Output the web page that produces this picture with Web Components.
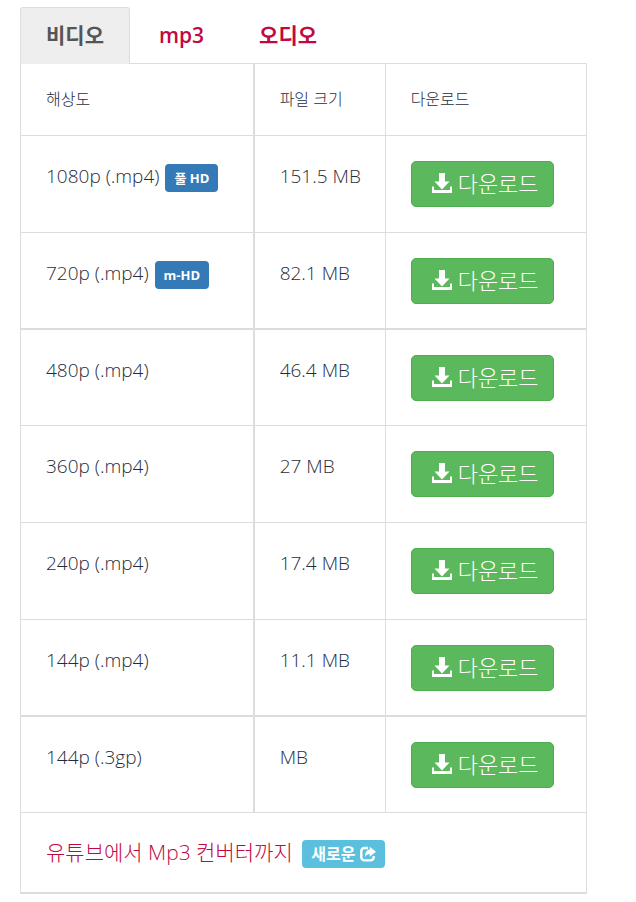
<!DOCTYPE html>
<html lang="ko">
<head>
<meta charset="utf-8">
<meta name="viewport" content="width=device-width, initial-scale=1">
<title>다운로드</title>
<style>
  body {
    margin: 0;
    background: #fff;
    color: #1f2d3d;
    font-family: "Open Sans", "Noto Sans CJK KR", sans-serif;
    font-size: 19px;
    font-weight: 300;
    line-height: 30px;
  }
</style>
</head>
<body>

<download-panel>
  <tab-bar slot="tabs">
    <tab-link active>비디오</tab-link>
    <tab-link>mp3</tab-link>
    <tab-link>오디오</tab-link>
  </tab-bar>
  <format-table></format-table>
</download-panel>

<script>
/* Outer box: tabs on top, the current tab's content below */
class DownloadPanel extends HTMLElement {
  constructor() {
    super();
    this.attachShadow({mode: 'open'});
    this.shadowRoot.innerHTML = `
      <style>
        :host {
          display: block;
          padding: 7px 49px 8px 20px;
        }
      </style>
      <slot name="tabs"></slot>
      <slot></slot>
    `;
  }
}
customElements.define('download-panel', DownloadPanel);


class TabBar extends HTMLElement {
  constructor() {
    super();
    this.attachShadow({mode: 'open'});
    this.shadowRoot.innerHTML = `
      <style>
        :host {
          display: block;
        }
        nav {
          display: flex;
          gap: 3px;
          margin-bottom: -1px; /* the active tab covers the table's top line */
        }
      </style>
      <nav><slot></slot></nav>
    `;
  }
}
customElements.define('tab-bar', TabBar);


class TabLink extends HTMLElement {
  constructor() {
    super();
    this.attachShadow({mode: 'open'});
    this.shadowRoot.innerHTML = `
      <style>
        :host {
          display: block;
        }
        a {
          display: block;
          padding: 12px 25px 14px;
          border: 1px solid transparent;
          border-bottom: 0;
          border-radius: 3px 3px 0 0;
          color: #c10841;
          font-size: 21px;
          font-weight: 600;
          text-decoration: none;
        }
        :host([active]) {
          position: relative;
          z-index: 1;
        }
        :host([active]) a {
          background: #eee;
          border-color: #ddd;
          color: #555;
        }
      </style>
      <a href="#"><slot></slot></a>
    `;
  }
}
customElements.define('tab-link', TabLink);


/* Small rounded badge, kind="info" is the light blue one */
class TextBadge extends HTMLElement {
  constructor() {
    super();
    this.attachShadow({mode: 'open'});
    this.shadowRoot.innerHTML = `
      <style>
        :host {
          display: inline-flex;
          align-items: center;
          gap: 5px;
          padding: 0 9px;
          border-radius: 4px;
          background: #337ab7;
          color: #fff;
          font-size: 13px;
          font-weight: 700;
          line-height: 28px;
          vertical-align: middle;
        }
        :host([kind="info"]) {
          background: #5bc0de;
          font-size: 16px;
        }
      </style>
      <slot></slot>
    `;
  }
}
customElements.define('text-badge', TextBadge);


class ShareIcon extends HTMLElement {
  constructor() {
    super();
    this.attachShadow({mode: 'open'});
    this.shadowRoot.innerHTML = `
      <style>
        :host { display: inline-flex; }
      </style>
      <svg width="16" height="16" viewBox="0 0 16 16" aria-hidden="true">
        <path d="M8 2H4.500A3.200 3.200 0 0 0 1.300 5.200v6A3.200 3.200 0 0 0 4.500 14.400h6a3.200 3.200 0 0 0 3.200-3.200V10" fill="none" stroke="#fff" stroke-width="2.400"/>
        <path d="M9.700.8L16 5.800l-6.300 5V8C7.800 8 6.300 8.700 5 11 5 6.500 6.800 3.700 9.700 3.400z" fill="#fff"/>
      </svg>
    `;
  }
}
customElements.define('share-icon', ShareIcon);


class DownloadButton extends HTMLElement {
  constructor() {
    super();
    this.attachShadow({mode: 'open'});
    this.shadowRoot.innerHTML = `
      <style>
        :host {
          display: block;
        }
        button {
          display: flex;
          align-items: center;
          gap: 6px;
          height: 46px;
          padding: 0 14px 2px 20px;
          border: 1px solid #4cae4c;
          border-radius: 5px;
          background: #5cb85c;
          color: #fff;
          font: inherit;
          font-size: 22px;
          white-space: nowrap;
          cursor: pointer;
        }
        button:hover {
          background: #449d44;
        }
      </style>
      <button type="button">
        <svg width="20" height="20" viewBox="0 0 20 20" aria-hidden="true">
          <path d="M7 0h6v8.500h4.500L10 16.500 2.500 8.500H7z" fill="#fff"/>
          <path d="M0 13.500h2V17h16v-3.500h2V20H0z" fill="#fff"/>
        </svg>
        <slot></slot>
      </button>
    `;
  }
}
customElements.define('download-button', DownloadButton);


const formats = [
  {name: '1080p (.mp4)', size: '151.5 MB', badge: '풀 HD'},
  {name: '720p (.mp4)', size: '82.1 MB', badge: 'm-HD', thick: true},
  {name: '480p (.mp4)', size: '46.4 MB'},
  {name: '360p (.mp4)', size: '27 MB'},
  {name: '240p (.mp4)', size: '17.4 MB'},
  {name: '144p (.mp4)', size: '11.1 MB', thick: true},
  {name: '144p (.3gp)', size: 'MB'},
];

class FormatTable extends HTMLElement {
  constructor() {
    super();
    this.attachShadow({mode: 'open'});
    this.shadowRoot.innerHTML = `
      <style>
        :host {
          display: block;
        }
        table {
          width: 100%;
          table-layout: fixed;
          border-collapse: separate;
          border-spacing: 0;
          border: 1px solid #ddd;
          border-bottom: 0;
        }
        .name { width: 41%; }
        .size { width: 132px; }
        th, td {
          padding: 25px;
          border-bottom: 1px solid #dadde0;
          text-align: left;
          vertical-align: top;
          white-space: nowrap;
        }
        th + th, td + td {
          border-left: 1px solid #ddd;
        }
        th:nth-child(2), td:nth-child(2) {
          border-left-width: 2px;
        }
        th {
          font-size: 16px;
          font-weight: 300;
          line-height: 21px;
        }
        .thick td {
          padding-bottom: 24px;
          border-bottom-width: 2px;
        }
        .thick + tr td {
          padding-bottom: 24px;
        }
        text-badge {
          margin-left: 1px;
        }
        tfoot td {
          padding-bottom: 24px;
          border-bottom-width: 2px;
          line-height: 28px;
        }
        tfoot a {
          color: #c10841;
          font-size: 21px;
          text-decoration: none;
        }
        tfoot text-badge {
          margin-left: 4px;
        }
      </style>
      <table>
        <colgroup><col class="name"><col class="size"><col></colgroup>
        <thead>
          <tr><th scope="col">해상도</th><th scope="col">파일 크기</th><th scope="col">다운로드</th></tr>
        </thead>
        <tbody>
          ${formats.map(f => `
            <tr class="${f.thick ? 'thick' : ''}">
              <td>${f.name}${f.badge ? ` <text-badge>${f.badge}</text-badge>` : ''}</td>
              <td>${f.size}</td>
              <td><download-button>다운로드</download-button></td>
            </tr>`).join('')}
        </tbody>
        <tfoot>
          <tr>
            <td colspan="3"><a href="#">유튜브에서 Mp3 컨버터까지 <text-badge kind="info">새로운 <share-icon></share-icon></text-badge></a></td>
          </tr>
        </tfoot>
      </table>
    `;
  }
}
customElements.define('format-table', FormatTable);
</script>
</body>
</html>
